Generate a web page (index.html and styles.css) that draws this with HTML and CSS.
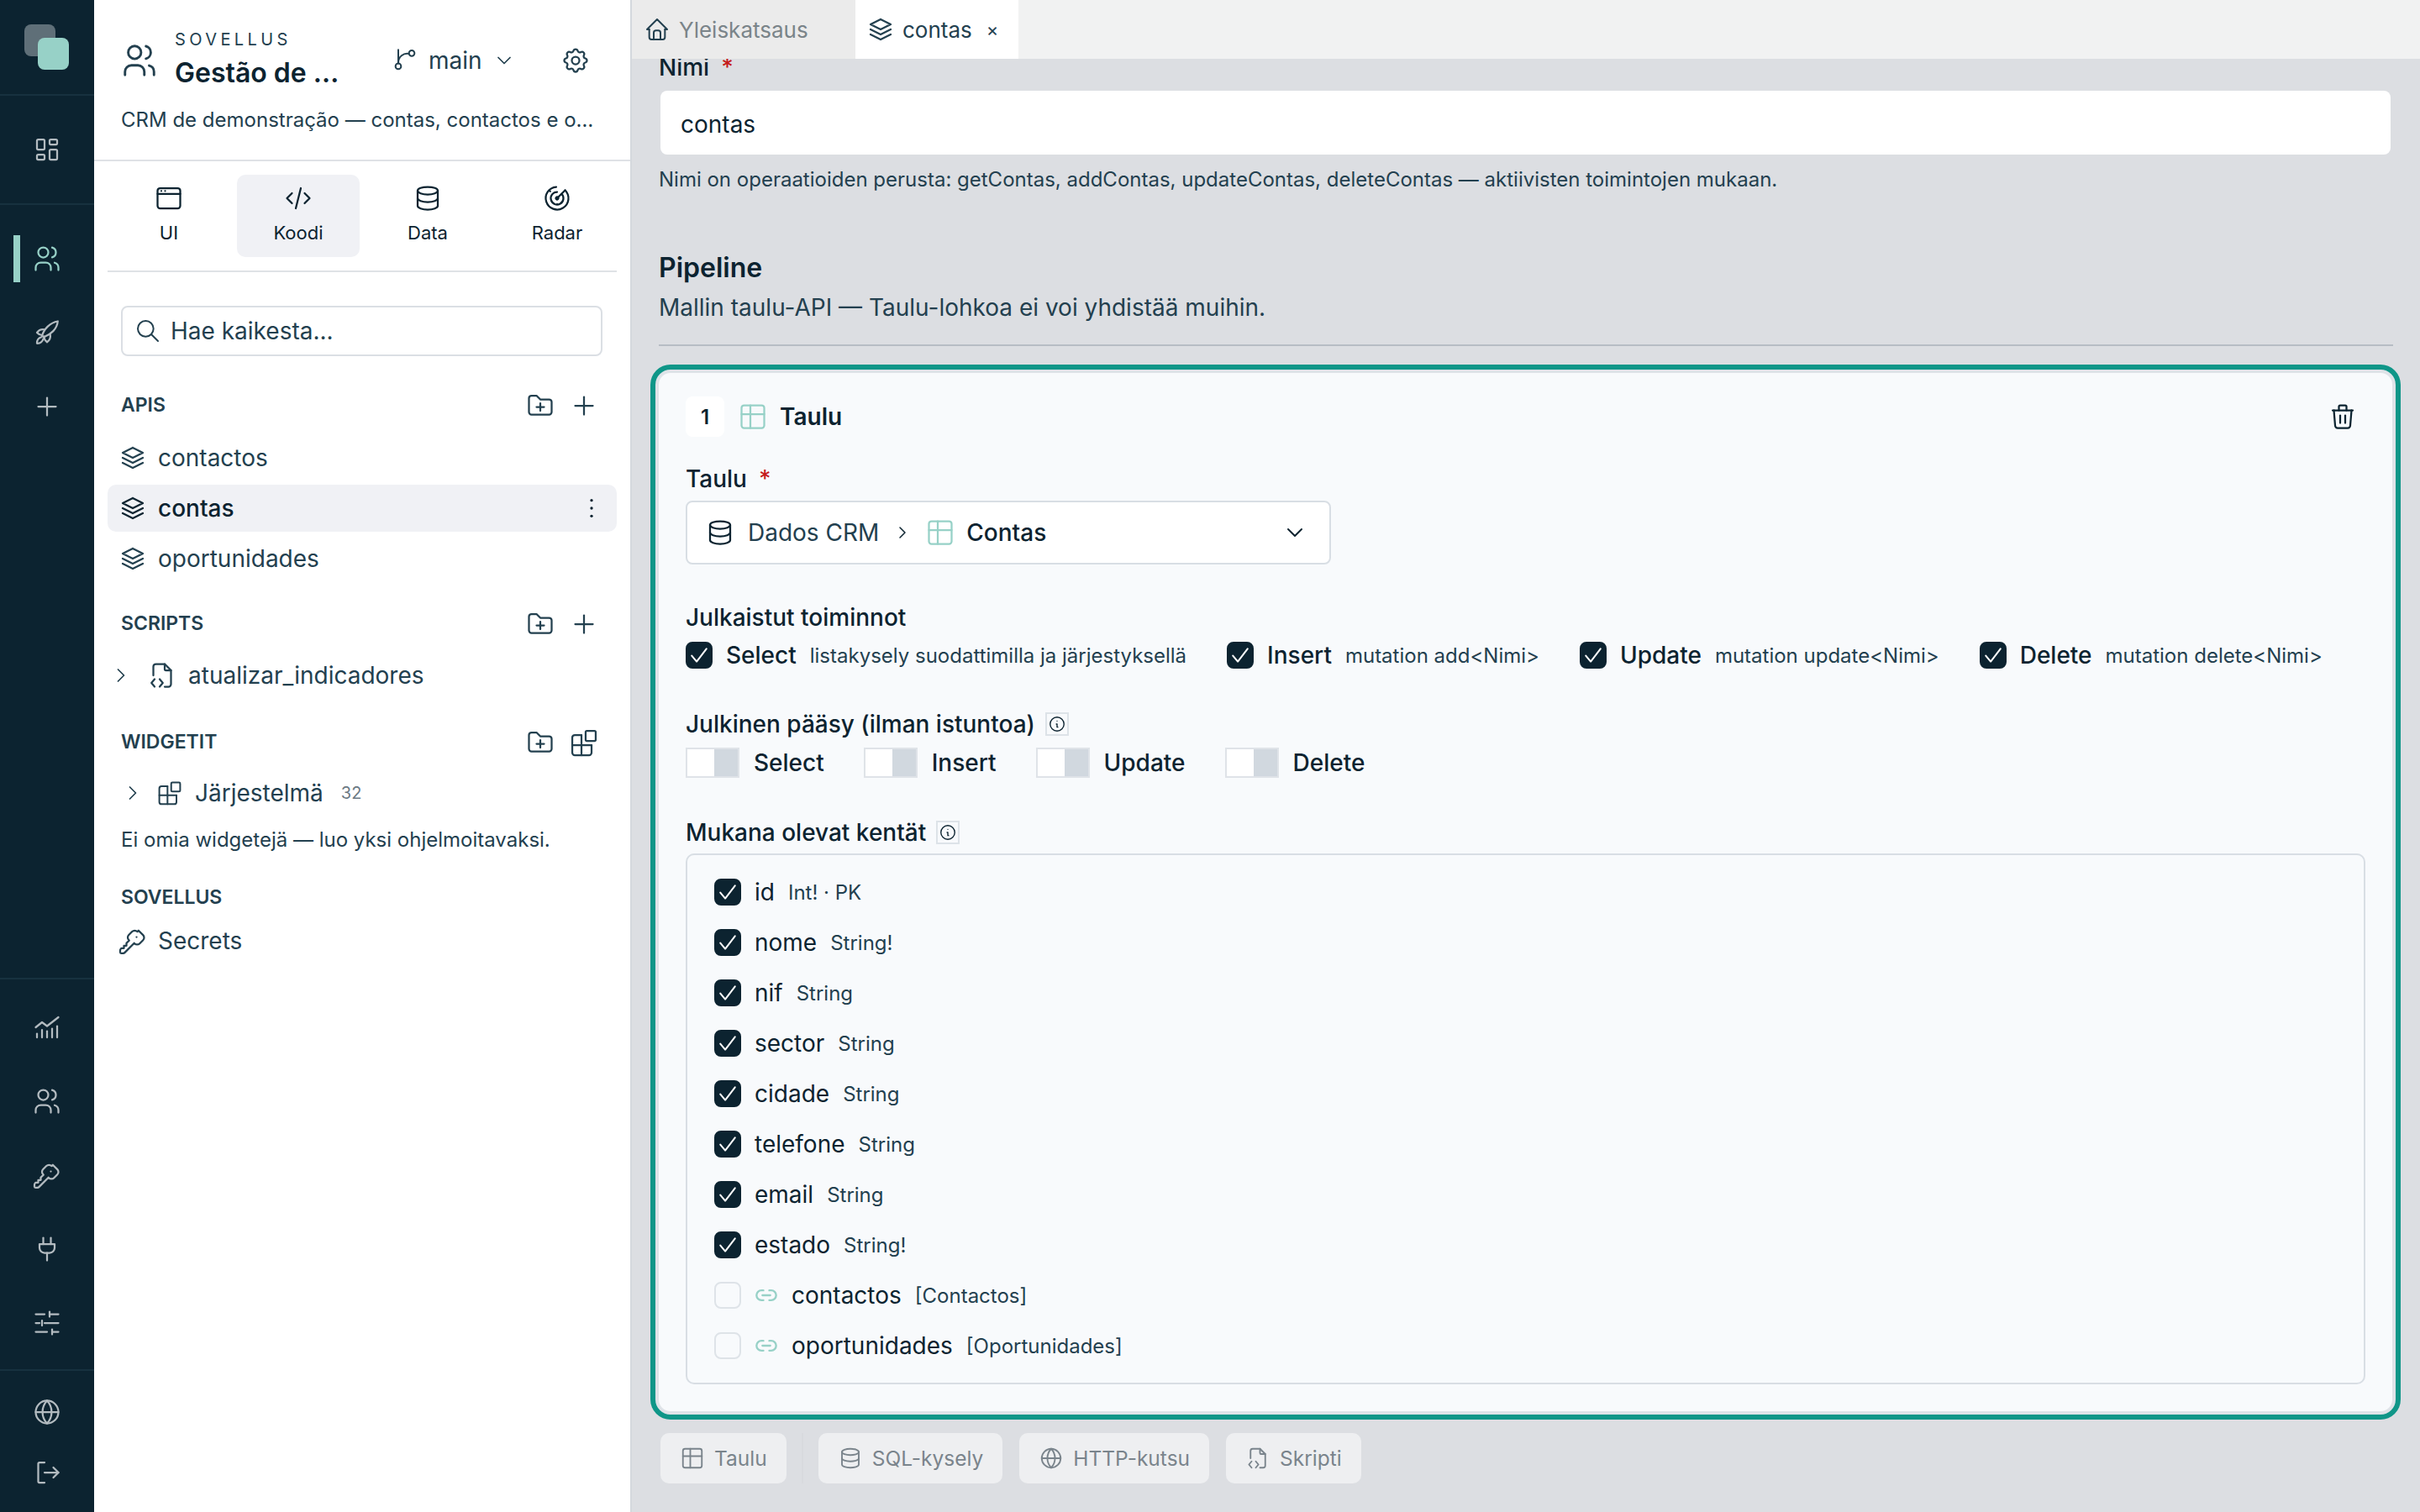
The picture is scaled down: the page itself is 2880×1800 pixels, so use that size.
FILE: index.html
```html
<!DOCTYPE html>
<html lang="fi">
<head>
    <meta charset="UTF-8">
    <title>contas - Sovellus</title>
    <link rel="stylesheet" href="styles.css">
</head>
<body>
    <svg class="sprite" aria-hidden="true">
        <symbol id="i-users" viewBox="0 0 24 24"><path d="M5 7a4 4 0 1 0 8 0a4 4 0 1 0 -8 0"/><path d="M3 21v-2a4 4 0 0 1 4 -4h4a4 4 0 0 1 4 4v2"/><path d="M16 3.13a4 4 0 0 1 0 7.75"/><path d="M21 21v-2a4 4 0 0 0 -3 -3.85"/></symbol>
        <symbol id="i-dashboard" viewBox="0 0 24 24"><path d="M5 4h4a1 1 0 0 1 1 1v6a1 1 0 0 1 -1 1h-4a1 1 0 0 1 -1 -1v-6a1 1 0 0 1 1 -1"/><path d="M5 16h4a1 1 0 0 1 1 1v2a1 1 0 0 1 -1 1h-4a1 1 0 0 1 -1 -1v-2a1 1 0 0 1 1 -1"/><path d="M15 12h4a1 1 0 0 1 1 1v6a1 1 0 0 1 -1 1h-4a1 1 0 0 1 -1 -1v-6a1 1 0 0 1 1 -1"/><path d="M15 4h4a1 1 0 0 1 1 1v2a1 1 0 0 1 -1 1h-4a1 1 0 0 1 -1 -1v-2a1 1 0 0 1 1 -1"/></symbol>
        <symbol id="i-rocket" viewBox="0 0 24 24"><path d="M8 14.5c1.5 -5.5 6.5 -10.5 12.5 -11.5c-.5 6 -5.500 10.500 -11 12.500z"/><path d="M10 9.500a6 6 0 0 0 -6 2.500a6 6 0 0 0 4 2"/><path d="M14.500 13.500a6 6 0 0 1 -2.500 6a6 6 0 0 1 -2.500 -4.500"/><path d="M7.500 15.500a5 5 0 0 0 -3.500 5a5 5 0 0 0 5 -3.500"/></symbol>
        <symbol id="i-plus" viewBox="0 0 24 24"><path d="M12 5v14"/><path d="M5 12h14"/></symbol>
        <symbol id="i-chart" viewBox="0 0 24 24"><path d="M3 12l5 -4l4 3l9 -7"/><path d="M4 20v-3"/><path d="M8 20v-6"/><path d="M12 20v-5"/><path d="M16 20v-7"/><path d="M20 20v-9"/></symbol>
        <symbol id="i-key" viewBox="0 0 24 24"><path d="M16.555 3.843l3.602 3.602a2.877 2.877 0 0 1 0 4.069l-2.643 2.643a2.877 2.877 0 0 1 -4.069 0l-.301 -.301l-7.567 7.567a2 2 0 0 1 -1.164 .567l-.116 .007h-1.297a1 1 0 0 1 -.993 -.883l-.007 -.117v-1.297a2 2 0 0 1 .467 -1.284l.119 -.13l.414 -.414h2v-2h2v-2l2.144 -2.144l-.301 -.301a2.877 2.877 0 0 1 0 -4.069l2.643 -2.643a2.877 2.877 0 0 1 4.069 0z"/><path d="M15 9h.01"/></symbol>
        <symbol id="i-plug" viewBox="0 0 24 24"><path d="M9 3v5"/><path d="M15 3v5"/><path d="M6 8h12v3a4 4 0 0 1 -4 4h-4a4 4 0 0 1 -4 -4z"/><path d="M12 15v6"/></symbol>
        <symbol id="i-sliders" viewBox="0 0 24 24"><path d="M21 5h-7"/><path d="M10 5h-7"/><path d="M21 12h-11"/><path d="M6 12h-3"/><path d="M21 19h-5"/><path d="M12 19h-9"/><path d="M14 3v4"/><path d="M8 10v4"/><path d="M16 17v4"/></symbol>
        <symbol id="i-globe" viewBox="0 0 24 24"><path d="M3 12a9 9 0 1 0 18 0a9 9 0 1 0 -18 0"/><path d="M12 3a13 13 0 0 0 0 18a13 13 0 0 0 0 -18"/><path d="M3 12h18"/></symbol>
        <symbol id="i-logout" viewBox="0 0 24 24"><path d="M10 4h-4a1 1 0 0 0 -1 1v14a1 1 0 0 0 1 1h4"/><path d="M10 12h11"/><path d="M17 8l4 4l-4 4"/></symbol>
        <symbol id="i-branch" viewBox="0 0 24 24"><path d="M6 2.500v12.200"/><path d="M3.500 17.200a2.500 2.500 0 1 0 5 0a2.500 2.500 0 1 0 -5 0"/><path d="M15.500 5.500a2.500 2.500 0 1 0 5 0a2.500 2.500 0 1 0 -5 0"/><path d="M15.600 6a8 8 0 0 0 -9.600 8"/></symbol>
        <symbol id="i-chevron-down" viewBox="0 0 24 24"><path d="M6 9l6 6l6 -6"/></symbol>
        <symbol id="i-chevron-right" viewBox="0 0 24 24"><path d="M9 6l6 6l-6 6"/></symbol>
        <symbol id="i-settings" viewBox="0 0 24 24"><path d="M10.325 4.317c.426 -1.756 2.924 -1.756 3.35 0a1.724 1.724 0 0 0 2.573 1.066c1.543 -.94 3.31 .826 2.37 2.37a1.724 1.724 0 0 0 1.065 2.572c1.756 .426 1.756 2.924 0 3.35a1.724 1.724 0 0 0 -1.066 2.573c.94 1.543 -.826 3.31 -2.37 2.37a1.724 1.724 0 0 0 -2.572 1.065c-.426 1.756 -2.924 1.756 -3.35 0a1.724 1.724 0 0 0 -2.573 -1.066c-1.543 .94 -3.31 -.826 -2.37 -2.37a1.724 1.724 0 0 0 -1.065 -2.572c-1.756 -.426 -1.756 -2.924 0 -3.35a1.724 1.724 0 0 0 1.066 -2.573c-.94 -1.543 .826 -3.31 2.37 -2.37c1 .608 2.296 .07 2.572 -1.065"/><path d="M9 12a3 3 0 1 0 6 0a3 3 0 0 0 -6 0"/></symbol>
        <symbol id="i-browser" viewBox="0 0 24 24"><path d="M3 6a2 2 0 0 1 2 -2h14a2 2 0 0 1 2 2v12a2 2 0 0 1 -2 2h-14a2 2 0 0 1 -2 -2z"/><path d="M3 8.500h18"/><path d="M6 6.200h.01"/><path d="M9 6.200h.01"/></symbol>
        <symbol id="i-code" viewBox="0 0 24 24"><path d="M7 8l-4 4l4 4"/><path d="M17 8l4 4l-4 4"/><path d="M14 4l-4 16"/></symbol>
        <symbol id="i-database" viewBox="0 0 24 24"><path d="M4 6a8 3 0 1 0 16 0a8 3 0 1 0 -16 0"/><path d="M4 6v6a8 3 0 0 0 16 0v-6"/><path d="M4 12v6a8 3 0 0 0 16 0v-6"/></symbol>
        <symbol id="i-radar" viewBox="0 0 24 24"><g transform="rotate(-135 12 12)"><path d="M11 12a1 1 0 1 0 2 0a1 1 0 1 0 -2 0"/><path d="M15.510 15.560a5 5 0 1 0 -3.510 1.440"/><path d="M18.832 17.860a9 9 0 1 0 -6.832 3.140"/><path d="M12 12v9"/></g><path d="M6.500 6.500h.01"/><path d="M12 16.800h.01"/></symbol>
        <symbol id="i-search" viewBox="0 0 24 24"><path d="M3 10a7 7 0 1 0 14 0a7 7 0 1 0 -14 0"/><path d="M21 21l-6 -6"/></symbol>
        <symbol id="i-folder-plus" viewBox="0 0 24 24"><path d="M5 4h4l3 3h7a2 2 0 0 1 2 2v8a2 2 0 0 1 -2 2h-14a2 2 0 0 1 -2 -2v-11a2 2 0 0 1 2 -2"/><path d="M12 10v6"/><path d="M9 13h6"/></symbol>
        <symbol id="i-stack" viewBox="0 0 24 24"><path d="M12 4l-8 4l8 4l8 -4l-8 -4"/><path d="M4 12l8 4l8 -4"/><path d="M4 16l8 4l8 -4"/></symbol>
        <symbol id="i-dots" viewBox="0 0 24 24"><path d="M12 5h.01"/><path d="M12 12h.01"/><path d="M12 19h.01"/></symbol>
        <symbol id="i-file-code" viewBox="0 0 24 24"><path d="M14 3v4a1 1 0 0 0 1 1h4"/><path d="M5 12v-7a2 2 0 0 1 2 -2h7l5 5v11a2 2 0 0 1 -2 2h-3"/><path d="M6 15l-2.500 3l2.500 3"/><path d="M10 15l2.500 3l-2.500 3"/></symbol>
        <symbol id="i-widget-add" viewBox="0 0 24 24"><path d="M10 6h-5.300a2 2 0 0 0 -2 2v12a2 2 0 0 0 2 2h11.300a2 2 0 0 0 2 -2v-6"/><path d="M2.700 14h15.300"/><path d="M10 6v16"/><path d="M13.300 3.700a1 1 0 0 1 1 -1h6a1 1 0 0 1 1 1v6a1 1 0 0 1 -1 1h-6a1 1 0 0 1 -1 -1z"/></symbol>
        <symbol id="i-home" viewBox="0 0 24 24"><path d="M5 12l-2 0l9 -9l9 9l-2 0"/><path d="M5 12v7a2 2 0 0 0 2 2h10a2 2 0 0 0 2 -2v-7"/><path d="M9 21v-6a2 2 0 0 1 2 -2h2a2 2 0 0 1 2 2v6"/></symbol>
        <symbol id="i-table" viewBox="0 0 24 24"><path d="M3 5a2 2 0 0 1 2 -2h14a2 2 0 0 1 2 2v14a2 2 0 0 1 -2 2h-14a2 2 0 0 1 -2 -2z"/><path d="M3 10h18"/><path d="M10 3v18"/></symbol>
        <symbol id="i-trash" viewBox="0 0 24 24"><path d="M4 7h16"/><path d="M10 11v6"/><path d="M14 11v6"/><path d="M5 7l1 12a2 2 0 0 0 2 2h8a2 2 0 0 0 2 -2l1 -12"/><path d="M9 7v-3a1 1 0 0 1 1 -1h4a1 1 0 0 1 1 1v3"/></symbol>
        <symbol id="i-info" viewBox="0 0 24 24"><path d="M3 12a9 9 0 1 0 18 0a9 9 0 0 0 -18 0"/><path d="M12 8h.01"/><path d="M11 12h1v4h1"/></symbol>
        <symbol id="i-check" viewBox="0 0 24 24"><path d="M4.500 12.500l5 6l10 -13"/></symbol>
        <symbol id="i-link" viewBox="0 0 24 24"><path d="M9 17h-2a5 5 0 0 1 0 -10h2"/><path d="M15 7h2a5 5 0 0 1 0 10h-2"/><path d="M8 12h8"/></symbol>
    </svg>

    <div class="app">
        <nav class="rail">
            <div class="rail-sec rail-logo">
                <div class="logo"><span class="logo-back"></span><span class="logo-front"></span></div>
            </div>
            <div class="rail-sec rail-top">
                <a class="rail-btn"><svg class="ic ic-36"><use href="#i-dashboard"/></svg></a>
            </div>
            <div class="rail-sec rail-apps">
                <a class="rail-btn active"><svg class="ic ic-36"><use href="#i-users"/></svg></a>
                <a class="rail-btn"><svg class="ic ic-36"><use href="#i-rocket"/></svg></a>
                <a class="rail-btn"><svg class="ic ic-36"><use href="#i-plus"/></svg></a>
            </div>
            <div class="rail-sec rail-admin">
                <a class="rail-btn"><svg class="ic ic-36"><use href="#i-chart"/></svg></a>
                <a class="rail-btn"><svg class="ic ic-36"><use href="#i-users"/></svg></a>
                <a class="rail-btn"><svg class="ic ic-36"><use href="#i-key"/></svg></a>
                <a class="rail-btn"><svg class="ic ic-36"><use href="#i-plug"/></svg></a>
                <a class="rail-btn"><svg class="ic ic-36"><use href="#i-sliders"/></svg></a>
            </div>
            <div class="rail-sec rail-foot">
                <a class="rail-btn"><svg class="ic ic-36"><use href="#i-globe"/></svg></a>
                <a class="rail-btn"><svg class="ic ic-36"><use href="#i-logout"/></svg></a>
            </div>
        </nav>

        <aside class="panel">
            <header class="app-head">
                <div class="app-row">
                    <svg class="ic ic-46"><use href="#i-users"/></svg>
                    <div class="app-names">
                        <div class="app-kicker">SOVELLUS</div>
                        <div class="app-title">Gestão de …</div>
                    </div>
                    <div class="branch">
                        <svg class="ic ic-32"><use href="#i-branch"/></svg>
                        <span>main</span>
                        <svg class="ic ic-28"><use href="#i-chevron-down"/></svg>
                    </div>
                    <svg class="ic ic-36 app-gear"><use href="#i-settings"/></svg>
                </div>
                <p class="app-desc">CRM de demonstração — contas, contactos e o…</p>
            </header>

            <div class="modes">
                <a class="mode"><svg class="ic ic-36"><use href="#i-browser"/></svg>UI</a>
                <a class="mode active"><svg class="ic ic-36"><use href="#i-code"/></svg>Koodi</a>
                <a class="mode"><svg class="ic ic-36"><use href="#i-database"/></svg>Data</a>
                <a class="mode"><svg class="ic ic-36"><use href="#i-radar"/></svg>Radar</a>
            </div>

            <div class="search">
                <svg class="ic ic-32"><use href="#i-search"/></svg>
                <span>Hae kaikesta...</span>
            </div>

            <div class="sec-head sec-apis">
                <span>APIS</span>
                <div class="sec-tools">
                    <svg class="ic ic-36"><use href="#i-folder-plus"/></svg>
                    <svg class="ic ic-36"><use href="#i-plus"/></svg>
                </div>
            </div>
            <a class="item"><svg class="ic ic-36"><use href="#i-stack"/></svg>contactos</a>
            <a class="item active"><svg class="ic ic-36"><use href="#i-stack"/></svg>contas<svg class="ic ic-32 item-more"><use href="#i-dots"/></svg></a>
            <a class="item"><svg class="ic ic-36"><use href="#i-stack"/></svg>oportunidades</a>

            <div class="sec-head sec-scripts">
                <span>SCRIPTS</span>
                <div class="sec-tools">
                    <svg class="ic ic-36"><use href="#i-folder-plus"/></svg>
                    <svg class="ic ic-36"><use href="#i-plus"/></svg>
                </div>
            </div>
            <a class="item tree">
                <svg class="ic ic-28"><use href="#i-chevron-right"/></svg>
                <svg class="ic ic-36"><use href="#i-file-code"/></svg>
                atualizar_indicadores
            </a>

            <div class="sec-head sec-widgets">
                <span>WIDGETIT</span>
                <div class="sec-tools">
                    <svg class="ic ic-36"><use href="#i-folder-plus"/></svg>
                    <svg class="ic ic-36"><use href="#i-widget-add"/></svg>
                </div>
            </div>
            <a class="item tree tree-sys">
                <svg class="ic ic-28"><use href="#i-chevron-right"/></svg>
                <svg class="ic ic-32"><use href="#i-widget-add"/></svg>
                Järjestelmä <small class="count">32</small>
            </a>
            <p class="empty">Ei omia widgetejä — luo yksi ohjelmoitavaksi.</p>

            <div class="sec-head sec-app"><span>SOVELLUS</span></div>
            <a class="item"><svg class="ic ic-36"><use href="#i-key"/></svg>Secrets</a>
        </aside>

        <main class="main">
            <div class="tabs">
                <a class="tab"><svg class="ic ic-32"><use href="#i-home"/></svg>Yleiskatsaus</a>
                <a class="tab current"><svg class="ic ic-36"><use href="#i-stack"/></svg>contas<span class="tab-x">×</span></a>
            </div>

            <div class="scroll">
                <label class="lbl lbl-name">Nimi <em>*</em></label>
                <div class="name-input">contas</div>
                <p class="help">Nimi on operaatioiden perusta: getContas, addContas, updateContas, deleteContas — aktiivisten toimintojen mukaan.</p>

                <h2 class="pipe-title">Pipeline</h2>
                <p class="pipe-sub">Mallin taulu-API — Taulu-lohkoa ei voi yhdistää muihin.</p>
                <hr class="rule">

                <section class="card">
                    <div class="card-head">
                        <span class="step">1</span>
                        <svg class="ic ic-36 teal"><use href="#i-table"/></svg>
                        <strong>Taulu</strong>
                        <svg class="ic ic-36 card-trash"><use href="#i-trash"/></svg>
                    </div>

                    <label class="lbl lbl-table">Taulu <em>*</em></label>
                    <div class="picker">
                        <svg class="ic ic-36"><use href="#i-database"/></svg>
                        <span class="picker-src">Dados CRM</span>
                        <svg class="ic ic-24"><use href="#i-chevron-right"/></svg>
                        <svg class="ic ic-36 teal"><use href="#i-table"/></svg>
                        <span class="picker-val">Contas</span>
                        <svg class="ic ic-32 picker-arrow"><use href="#i-chevron-down"/></svg>
                    </div>

                    <label class="lbl lbl-ops">Julkaistut toiminnot</label>
                    <div class="ops">
                        <div class="op"><span class="cb on"><svg class="ic"><use href="#i-check"/></svg></span><b>Select</b><span class="hint">listakysely suodattimilla ja järjestyksellä</span></div>
                        <div class="op"><span class="cb on"><svg class="ic"><use href="#i-check"/></svg></span><b>Insert</b><span class="hint">mutation add&lt;Nimi&gt;</span></div>
                        <div class="op"><span class="cb on"><svg class="ic"><use href="#i-check"/></svg></span><b>Update</b><span class="hint">mutation update&lt;Nimi&gt;</span></div>
                        <div class="op"><span class="cb on"><svg class="ic"><use href="#i-check"/></svg></span><b>Delete</b><span class="hint">mutation delete&lt;Nimi&gt;</span></div>
                    </div>

                    <label class="lbl lbl-public">Julkinen pääsy (ilman istuntoa) <span class="info"><svg class="ic"><use href="#i-info"/></svg></span></label>
                    <div class="toggles">
                        <div class="tog"><span class="switch"><i></i></span>Select</div>
                        <div class="tog"><span class="switch"><i></i></span>Insert</div>
                        <div class="tog"><span class="switch"><i></i></span>Update</div>
                        <div class="tog"><span class="switch"><i></i></span>Delete</div>
                    </div>

                    <label class="lbl lbl-fields">Mukana olevat kentät <span class="info"><svg class="ic"><use href="#i-info"/></svg></span></label>
                    <div class="fields">
                        <div class="field"><span class="cb on"><svg class="ic"><use href="#i-check"/></svg></span><span class="fname">id</span><span class="hint">Int! · PK</span></div>
                        <div class="field"><span class="cb on"><svg class="ic"><use href="#i-check"/></svg></span><span class="fname">nome</span><span class="hint">String!</span></div>
                        <div class="field"><span class="cb on"><svg class="ic"><use href="#i-check"/></svg></span><span class="fname">nif</span><span class="hint">String</span></div>
                        <div class="field"><span class="cb on"><svg class="ic"><use href="#i-check"/></svg></span><span class="fname">sector</span><span class="hint">String</span></div>
                        <div class="field"><span class="cb on"><svg class="ic"><use href="#i-check"/></svg></span><span class="fname">cidade</span><span class="hint">String</span></div>
                        <div class="field"><span class="cb on"><svg class="ic"><use href="#i-check"/></svg></span><span class="fname">telefone</span><span class="hint">String</span></div>
                        <div class="field"><span class="cb on"><svg class="ic"><use href="#i-check"/></svg></span><span class="fname">email</span><span class="hint">String</span></div>
                        <div class="field"><span class="cb on"><svg class="ic"><use href="#i-check"/></svg></span><span class="fname">estado</span><span class="hint">String!</span></div>
                        <div class="field"><span class="cb"></span><svg class="ic ic-28 teal link"><use href="#i-link"/></svg><span class="fname">contactos</span><span class="hint">[Contactos]</span></div>
                        <div class="field"><span class="cb"></span><svg class="ic ic-28 teal link"><use href="#i-link"/></svg><span class="fname">oportunidades</span><span class="hint">[Oportunidades]</span></div>
                    </div>
                </section>

                <div class="adders">
                    <a class="adder"><svg class="ic ic-30"><use href="#i-table"/></svg>Taulu</a>
                    <span class="adder-sep"></span>
                    <a class="adder"><svg class="ic ic-30"><use href="#i-database"/></svg>SQL-kysely</a>
                    <a class="adder"><svg class="ic ic-30"><use href="#i-globe"/></svg>HTTP-kutsu</a>
                    <a class="adder"><svg class="ic ic-30"><use href="#i-file-code"/></svg>Skripti</a>
                </div>
            </div>
        </main>
    </div>
</body>
</html>
```

FILE: styles.css
```css
* {
    margin: 0;
    padding: 0;
    box-sizing: border-box;
    font-family: 'Inter', 'Liberation Sans', sans-serif;
}

html, body {
    height: 100%;
    overflow: hidden;
}

body {
    color: #0c2330;
    font-size: 28px;
}

.sprite {
    display: none;
}

.ic {
    display: block;
    flex: none;
    fill: none;
    stroke: currentColor;
    stroke-width: 1.5;
    stroke-linecap: round;
    stroke-linejoin: round;
}

.ic-24 { width: 24px; height: 24px; }
.ic-28 { width: 28px; height: 28px; }
.ic-30 { width: 30px; height: 30px; }
.ic-32 { width: 32px; height: 32px; }
.ic-36 { width: 36px; height: 36px; }
.ic-46 { width: 46px; height: 46px; }

.teal {
    color: #97d1c7;
}

.app {
    display: flex;
    height: 1800px;
}

/* left rail */
.rail {
    width: 112px;
    flex: none;
    background: #0c2330;
    display: flex;
    flex-direction: column;
}

.rail-sec {
    display: flex;
    flex-direction: column;
    align-items: center;
    border-bottom: 2px solid #17313f;
}

.rail-logo { height: 114px; justify-content: center; }
.rail-top { height: 130px; justify-content: center; }
.rail-apps { height: 922px; padding-top: 46px; }
.rail-admin { height: 466px; padding-top: 39px; }
.rail-foot { flex: 1; border-bottom: none; padding-top: 31px; gap: 36px; }

.rail-apps, .rail-admin {
    gap: 52px;
}

.logo {
    position: relative;
    width: 54px;
    height: 54px;
    margin-top: -1px;
}

.logo-back, .logo-front {
    position: absolute;
    width: 37px;
    height: 38px;
    border-radius: 8px;
}

.logo-back { left: 0; top: 0; background: #5f6f78; }
.logo-front { left: 16px; top: 16px; background: #97d1c7; }

.rail-btn {
    position: relative;
    display: block;
    width: 36px;
    height: 36px;
    color: #b3bbc0;
}

.rail-btn.active {
    color: #97d1c7;
}

.rail-btn.active::before {
    content: "";
    position: absolute;
    left: -22px;
    top: -10px;
    width: 8px;
    height: 56px;
    background: #97d1c7;
}

/* side panel */
.panel {
    width: 638px;
    flex: none;
    background: #fff;
    display: flex;
    flex-direction: column;
    color: #23404f;
}

.app-head {
    height: 192px;
    padding: 33px 16px 0 31px;
    border-bottom: 2px solid #dfe2e6;
}

.app-row {
    display: flex;
    align-items: center;
}

.app-row > .ic,
.branch {
    margin-top: 6px;
}

.app-names {
    margin-left: 19px;
    width: 258px;
}

.app-kicker {
    font-size: 20px;
    line-height: 28px;
    letter-spacing: 0.22em;
}

.app-title {
    margin-top: 8px;
    font-size: 32px;
    line-height: 36px;
    font-weight: 600;
    color: #0c2330;
}

.branch {
    display: flex;
    align-items: center;
    gap: 12px;
}

.app-gear {
    margin-left: 53px;
}

.app-desc {
    margin: 22px 0 0 1px;
    font-size: 24px;
    line-height: 32px;
    white-space: nowrap;
}

.modes {
    display: grid;
    grid-template-columns: repeat(4, 146px);
    gap: 8px;
    margin: 16px 16px 0;
    padding-bottom: 16px;
    border-bottom: 2px solid #dfe2e6;
    height: 116px;
}

.mode {
    height: 98px;
    border-radius: 10px;
    display: flex;
    flex-direction: column;
    align-items: center;
    padding-top: 10px;
    gap: 9px;
    font-size: 22px;
    line-height: 28px;
    color: #0c2330;
}

.mode.active {
    background: #f0f1f5;
}

.search {
    margin: 40px 33px 0 32px;
    height: 60px;
    border: 2px solid #dbdfe4;
    border-radius: 8px;
    display: flex;
    align-items: center;
    gap: 11px;
    padding-left: 14px;
    color: #23404f;
}

.sec-head {
    display: flex;
    justify-content: space-between;
    align-items: center;
    height: 36px;
    padding: 0 37px 0 32px;
    font-size: 23px;
    font-weight: 600;
}

.sec-apis { margin-top: 40px; margin-bottom: 17px; }
.sec-scripts { margin-top: 27px; margin-bottom: 16px; }
.sec-widgets { margin-top: 29px; margin-bottom: 15px; }
.sec-app { margin-top: 34px; margin-bottom: 6px; }

.sec-tools {
    display: flex;
    gap: 16px;
    margin-top: 2px;
}

.item {
    display: flex;
    align-items: center;
    height: 56px;
    margin: 0 16px 4px;
    padding-left: 12px;
    border-radius: 10px;
    gap: 12px;
}

.item.active {
    background: #f0f1f5;
    color: #0c2330;
    font-weight: 500;
}

.item-more {
    margin-left: auto;
    margin-right: 14px;
    stroke-width: 2.5;
}

.tree {
    padding-left: 2px;
    gap: 13px;
}

.tree .ic-36 {
    margin-left: 4px;
}

.tree-sys {
    padding-left: 16px;
    margin-bottom: 0;
    gap: 14px;
}

.count {
    font-size: 20px;
    color: #6c7a84;
    margin-left: 7px;
}

.empty {
    margin: 12px 0 0 32px;
    font-size: 24px;
    line-height: 32px;
}

/* main */
.main {
    flex: 1;
    min-width: 0;
    background: #dcdee2;
    border-left: 2px solid #d4d8dd;
    display: flex;
    flex-direction: column;
}

.tabs {
    height: 70px;
    flex: none;
    display: flex;
    background: #f1f2f2;
    position: relative;
    z-index: 1;
}

.tab {
    display: flex;
    align-items: center;
    gap: 10px;
    font-size: 26px;
    color: #7a8489;
    background: #ebebeb;
    width: 266px;
    padding-left: 14px;
}

.tab.current {
    background: #fff;
    color: #23404f;
    width: 194px;
    padding-left: 12px;
    gap: 8px;
}

.tab .ic {
    color: #23404f;
}

.tab-x {
    font-size: 22px;
    margin-left: 9px;
}

.scroll {
    flex: 1;
    min-height: 0;
    padding: 0 32px;
    overflow: hidden;
}

.lbl {
    display: flex;
    align-items: center;
    font-size: 28px;
    line-height: 36px;
    font-weight: 500;
    gap: 6px;
    color: #0c2330;
}

.lbl em {
    font-style: normal;
    color: #c51b1b;
    margin-left: 8px;
}

.lbl-name {
    margin-top: -8px;
}

.name-input {
    margin: 10px 0 0 2px;
    height: 76px;
    background: #fff;
    border-radius: 8px;
    display: flex;
    align-items: center;
    padding: 3px 0 0 24px;
    width: 2059px;
}

.help {
    margin-top: 14px;
    font-size: 24px;
    line-height: 32px;
    color: #23404f;
}

.pipe-title {
    margin-top: 69px;
    font-size: 32px;
    line-height: 40px;
    font-weight: 600;
    color: #0c2330;
}

.pipe-sub {
    margin-top: 8px;
    line-height: 38px;
    color: #23404f;
}

.rule {
    border: none;
    height: 2px;
    background: #b7bdc4;
    margin-top: 25px;
}

.card {
    margin: 28px -3px 0 -4px;
    height: 1244px;
    background: #f8fafc;
    border: 4px solid #dfe3e8;
    border-radius: 18px;
    box-shadow: 0 0 0 6px #0f9688;
    padding: 28px 32px 0 32px;
}

.card-head {
    display: flex;
    align-items: center;
    height: 48px;
}

.step {
    width: 46px;
    height: 48px;
    background: #fff;
    border-radius: 8px;
    display: flex;
    align-items: center;
    justify-content: center;
    font-size: 24px;
    font-weight: 600;
}

.card-head .teal {
    margin: 0 14px 0 16px;
}

.card-head strong {
    font-weight: 600;
    color: #0c2330;
}

.card-trash {
    margin-left: auto;
    margin-right: 9px;
}

.lbl-table { margin-top: 32px; }
.lbl-ops { margin-top: 45px; }
.lbl-public { margin-top: 46px; }
.lbl-fields { margin-top: 48px; }

.picker {
    margin-top: 8px;
    width: 768px;
    height: 76px;
    border: 2px solid #d8dee4;
    border-radius: 8px;
    background: #fff;
    display: flex;
    align-items: center;
    padding-left: 21px;
}

.picker-src {
    margin-left: 15px;
    color: #23404f;
}

.picker .ic-24 {
    margin: 0 15px 0 16px;
}

.picker-val {
    margin-left: 13px;
    font-weight: 500;
    color: #0c2330;
}

.picker-arrow {
    margin-left: auto;
    margin-right: 25px;
}

.cb {
    width: 32px;
    height: 32px;
    flex: none;
    border-radius: 8px;
    border: 2px solid #dee3e8;
    display: block;
}

.cb.on {
    background: #0c2330;
    border-color: #0c2330;
    color: #fff;
}

.cb .ic {
    width: 28px;
    height: 28px;
    stroke-width: 1.75;
}

.ops {
    margin-top: 9px;
    display: flex;
    gap: 48px;
}

.op {
    display: flex;
    align-items: center;
    gap: 16px;
    height: 36px;
}

.op b {
    font-weight: 500;
    color: #0c2330;
}

.hint {
    font-size: 24px;
    color: #23404f;
}

.info {
    width: 28px;
    height: 28px;
    border: 2px solid #dde3e8;
    padding: 1px;
    margin-left: 6px;
}

.info .ic {
    width: 22px;
    height: 22px;
}

.toggles {
    margin-top: 10px;
    display: flex;
    gap: 47px;
}

.tog {
    display: flex;
    align-items: center;
    gap: 17px;
    font-weight: 500;
    height: 36px;
}

.switch {
    width: 64px;
    height: 36px;
    background: #d1d8df;
    border: 2px solid #dfe3e8;
    display: block;
}

.switch i {
    display: block;
    width: 32px;
    height: 32px;
    background: #fff;
}

.lbl-fields {
    margin-top: 47px;
}

.fields {
    margin-top: 7px;
    height: 632px;
    border: 2px solid #d8dee4;
    border-radius: 10px;
    padding: 26px 32px 0;
    display: flex;
    flex-direction: column;
    gap: 24px;
}

.field {
    display: flex;
    align-items: center;
    height: 36px;
    gap: 16px;
}

.field .fname {
    color: #0c2330;
}

.link {
    stroke-width: 2;
}

.adders {
    margin: 22px 0 0 2px;
    display: flex;
    align-items: center;
    gap: 21px;
}

.adder {
    height: 60px;
    display: flex;
    align-items: center;
    gap: 11px;
    padding: 0 23px;
    background: #eeeff1;
    border-radius: 10px;
    font-size: 24.5px;
    color: #7a848c;
}

.adder + .adder {
    margin-left: -1px;
}

.adder-sep {
    width: 2px;
    height: 60px;
    background: #d8dade;
    margin: 0 -3px;
}
```
